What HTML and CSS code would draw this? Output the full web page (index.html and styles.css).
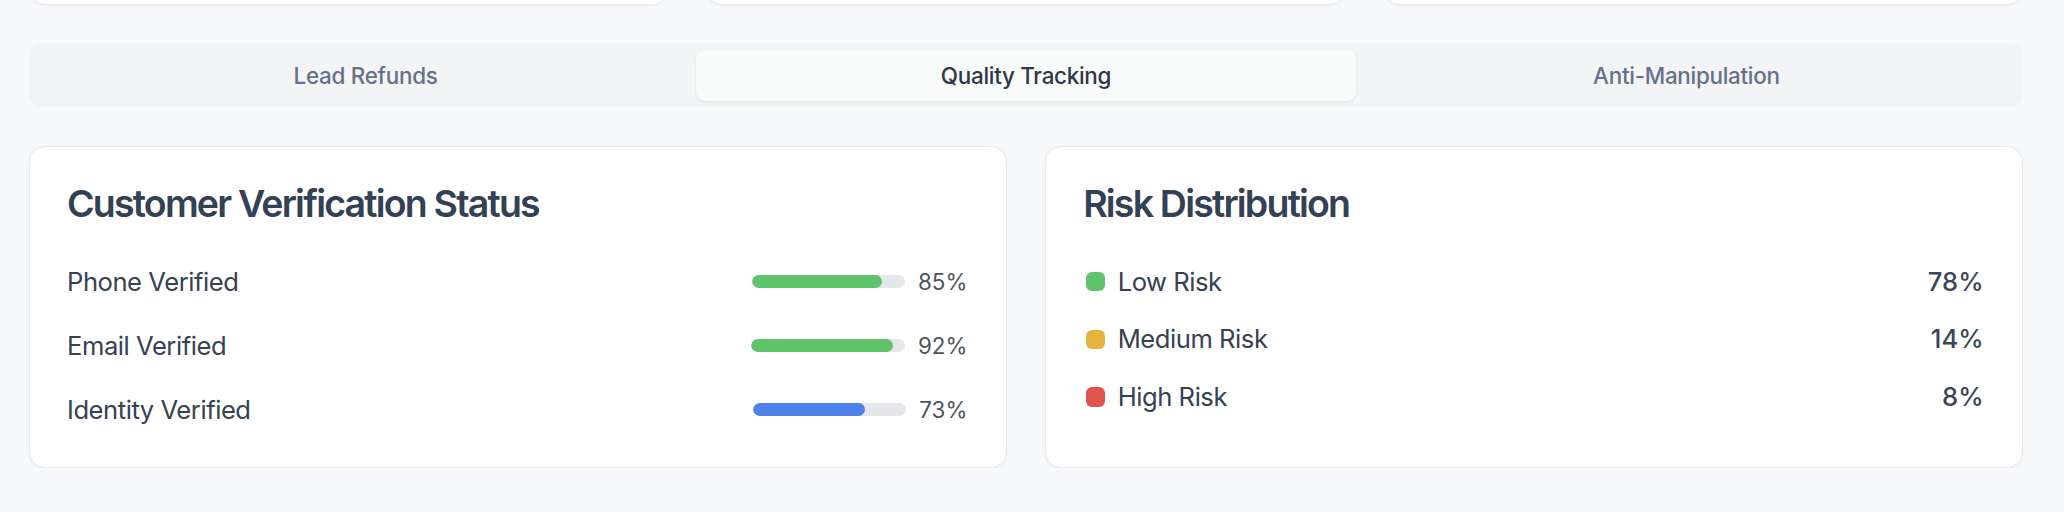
FILE: index.html
```html
<!DOCTYPE html>
<html lang="en">
<head>
<meta charset="utf-8">
<title>Quality Tracking</title>
<link rel="stylesheet" href="styles.css">
</head>
<body>
<main class="page">
  <section class="stats">
    <div class="card stat-card"></div>
    <div class="card stat-card"></div>
    <div class="card stat-card"></div>
  </section>

  <nav class="tabs">
    <button class="tab">Lead Refunds</button>
    <button class="tab active">Quality Tracking</button>
    <button class="tab">Anti-Manipulation</button>
  </nav>

  <section class="panels">
    <div class="card">
      <div class="card-header"><h3 class="card-title">Customer Verification Status</h3></div>
      <div class="card-content verify-list">
        <div class="verify-row">
          <span class="label">Phone Verified</span>
          <div class="meter">
            <div class="track"><div class="fill green" style="width:85%"></div></div>
            <span class="pct">85%</span>
          </div>
        </div>
        <div class="verify-row">
          <span class="label">Email Verified</span>
          <div class="meter">
            <div class="track"><div class="fill green" style="width:92%"></div></div>
            <span class="pct">92%</span>
          </div>
        </div>
        <div class="verify-row">
          <span class="label">Identity Verified</span>
          <div class="meter">
            <div class="track"><div class="fill blue" style="width:73%"></div></div>
            <span class="pct">73%</span>
          </div>
        </div>
      </div>
    </div>

    <div class="card">
      <div class="card-header"><h3 class="card-title">Risk Distribution</h3></div>
      <div class="card-content risk-list">
        <div class="risk-row">
          <div class="risk-name"><span class="dot green"></span><span class="label">Low Risk</span></div>
          <span class="risk-val">78%</span>
        </div>
        <div class="risk-row">
          <div class="risk-name"><span class="dot yellow"></span><span class="label">Medium Risk</span></div>
          <span class="risk-val">14%</span>
        </div>
        <div class="risk-row">
          <div class="risk-name"><span class="dot red"></span><span class="label">High Risk</span></div>
          <span class="risk-val">8%</span>
        </div>
      </div>
    </div>
  </section>
</main>
</body>
</html>
```

FILE: styles.css
```css
* { box-sizing: border-box; }

html, body {
  margin: 0;
  padding: 0;
  background: #f8f9fb;
  font-family: Inter, "Noto Sans", "Liberation Sans", sans-serif;
  color: #374151;
}

.page {
  padding: 0 41px 0 29px;
  display: flex;
  flex-direction: column;
  gap: 38.4px;
}

.card {
  background: #ffffff;
  border: 1px solid #e7e9ee;
  border-radius: 16px;
  box-shadow: 0 1px 3px rgba(16, 24, 40, 0.06);
}

.stats {
  display: grid;
  grid-template-columns: repeat(3, 1fr);
  gap: 38.4px;
  margin-top: -115px;
}

.stat-card {
  height: 120px;
}

.tabs {
  display: grid;
  grid-template-columns: repeat(3, 1fr);
  height: 64px;
  padding: 6.4px;
  background: #f2f4f6;
  border-radius: 12.8px;
}

.tab {
  border: 0;
  background: transparent;
  font-family: inherit;
  font-size: 22.4px;
  font-weight: 500;
  letter-spacing: -0.012em;
  color: #64718a;
  border-radius: 9.6px;
  padding: 0;
  cursor: pointer;
}

.tab.active {
  background: #f9fafa;
  color: #2d3748;
  box-shadow: 0 1px 3px rgba(16, 24, 40, 0.08);
}

.panels {
  display: grid;
  grid-template-columns: 1fr 1fr;
  gap: 38.4px;
}

.card-header {
  padding: 38.4px 37px 40px;
}

.card-title {
  margin: 0;
  font-size: 37.5px;
  line-height: 1;
  font-weight: 600;
  letter-spacing: -0.048em;
  color: #334155;
}

.card-content {
  padding: 0 38.4px 38px 37px;
  display: flex;
  flex-direction: column;
}

.verify-list { gap: 25.6px; }
.risk-list { gap: 19.2px; padding-left: 39.5px; }

.label {
  font-size: 25.6px;
  line-height: 38.4px;
  letter-spacing: -0.018em;
  color: #364152;
}

.verify-row, .risk-row {
  display: flex;
  align-items: center;
  justify-content: space-between;
}

.meter {
  display: flex;
  align-items: center;
  gap: 12.8px;
}

.track {
  width: 153.6px;
  height: 12.8px;
  background: #e5e7eb;
  border-radius: 999px;
  overflow: hidden;
}

.fill {
  height: 100%;
  border-radius: 999px;
}

.fill.green { background: #5ec36b; }
.fill.blue { background: #4e82ea; }

.pct {
  font-size: 22.4px;
  line-height: 32px;
  color: #4b5563;
}

.risk-name {
  display: flex;
  align-items: center;
  gap: 12.8px;
}

.dot {
  width: 19.2px;
  height: 19.2px;
  border-radius: 6px;
}

.dot.green { background: #5ec36b; }
.dot.yellow { background: #e4b53e; }
.dot.red { background: #e0534e; }

.risk-val {
  font-size: 25.6px;
  line-height: 38.4px;
  font-weight: 500;
  color: #3a4558;
}
```
